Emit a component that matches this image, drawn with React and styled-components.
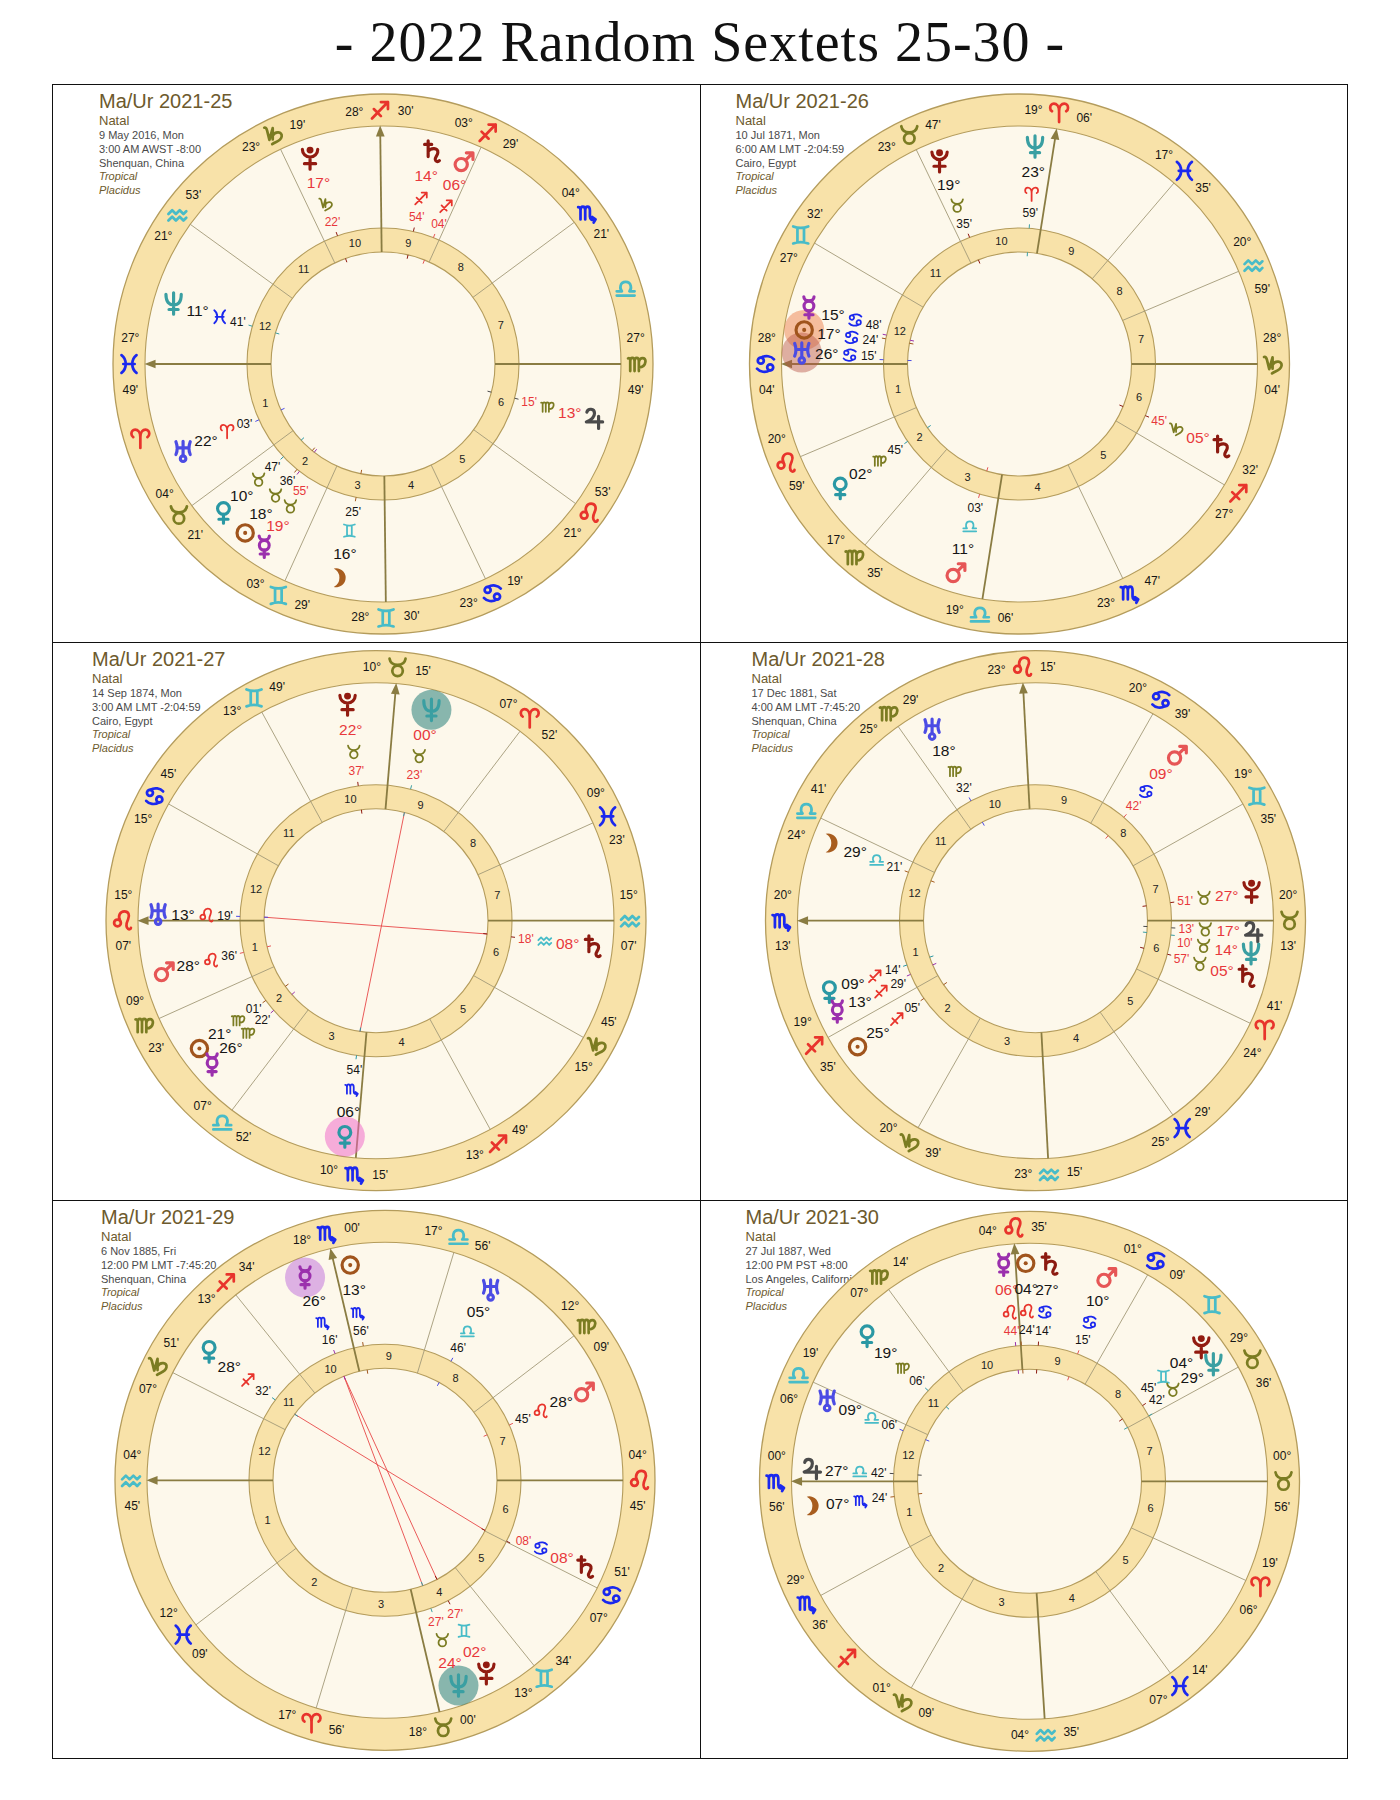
import React from 'react';
import styled, { createGlobalStyle } from 'styled-components';

const GlobalStyle = createGlobalStyle`
  html, body { margin: 0; padding: 0; background: #ffffff; }
  body { width: 1400px; font-family: "Liberation Sans", Arial, sans-serif; }
`;

const RING = '#f8e2a9';
const CREAM = '#fdf8eb';
const EDGE = '#b49c5c';
const AXIS = '#8a7c42';
const CUSP = '#a39a78';
const RED = '#e8383c';
const INK = '#151515';

const Page = styled.div`
  width: 1400px;
  min-height: 1800px;
  background: #fff;
  display: flex;
  flex-direction: column;
  align-items: flex-start;
`;

const Title = styled.h1`
  margin: 0;
  width: 1400px;
  height: 84px;
  line-height: 84px;
  text-align: center;
  font-family: "Liberation Serif", "DejaVu Serif", serif;
  font-weight: 400;
  font-size: 56px;
  letter-spacing: 1px;
  color: #111;
`;

const Grid = styled.div`
  margin-left: 52px;
  width: 1296px;
  box-sizing: border-box;
  display: grid;
  grid-template-columns: 1fr 1fr;
  grid-template-rows: repeat(3, 557px);
  gap: 1px;
  padding: 1px;
  background: #111;
`;

const Cell = styled.div`
  background: #fff;
  display: grid;
  overflow: hidden;
  & > * {
    grid-area: 1 / 1;
  }
`;

const Header = styled.div`
  align-self: start;
  justify-self: start;
  display: flex;
  flex-direction: column;
  padding: 5px 0 0 ${(p) => p.$x}px;
  white-space: nowrap;
`;

const ChartName = styled.div`
  font-size: 20px;
  line-height: 22px;
  color: #6d5a2d;
`;

const ChartKind = styled.div`
  margin-top: 1px;
  font-size: 13px;
  line-height: 16px;
  color: #6d5a2d;
`;

const InfoLine = styled.div`
  font-size: 11px;
  line-height: 13.8px;
  color: ${(p) => (p.$italic ? '#6d5a2d' : '#4a4a4a')};
  font-style: ${(p) => (p.$italic ? 'italic' : 'normal')};
  &:first-of-type {
    margin-top: 1px;
  }
`;

const WheelSvg = styled.svg`
  display: block;
  width: 646px;
  height: 557px;
`;

const NumText = styled.text`
  font-family: "Liberation Sans", Arial, sans-serif;
  font-size: ${(p) => p.$size}px;
  fill: ${(p) => p.$color || INK};
`;

const ELEM = ['#e8342c', '#7b7c22', '#48bcc8', '#1b28ee'];
const signColor = (s) => ELEM[s % 4];

/* Astrological symbols drawn as small icons, in a box of about ±10 units */
const SIGN_ICONS = [
  { d: 'M 0 9.5 V -2 C 0 -8 -3 -10 -5.5 -10 C -8 -10 -9.5 -8 -9.5 -5.5 C -9.5 -3.5 -8.5 -2.5 -7.5 -2 M 0 -2 C 0 -8 3 -10 5.5 -10 C 8 -10 9.5 -8 9.5 -5.5 C 9.5 -3.5 8.5 -2.5 7.5 -2' },
  { d: 'M -8.5 -9.5 C -7.5 -3.5 -3.5 -3 0 -3 C 3.5 -3 7.5 -3.5 8.5 -9.5', circles: [[0, 3.4, 5.6]] },
  { d: 'M -8 -9 Q 0 -6 8 -9 M -8 9 Q 0 6 8 9 M -3.5 -7.2 V 7.2 M 3.5 -7.2 V 7.2' },
  { d: 'M -4.5 -6.8 C 0 -9.5 6 -8.5 9 -5 M 4.5 6.8 C 0 9.5 -6 8.5 -9 5', circles: [[-5, -3.5, 3.2], [5, 3.5, 3.2]] },
  { d: 'M -2.2 -0.5 C -4.5 -5 -2 -10 2.5 -10 C 7 -10 8.5 -6 6.5 -1.5 C 4.5 3 4 7 6.5 8.8 C 8 9.8 9.3 8.8 9.5 7.5', circles: [[-4.8, 2.4, 3.6]] },
  { d: 'M -9.5 -6 C -8.5 -6.5 -7.2 -6 -7.2 -4 V 7.5 M -7.2 -3 C -7.2 -7.8 -2.6 -7.8 -2.6 -3 V 7.5 M -2.6 -3 C -2.6 -7.8 2 -7.8 2 -3 V 7.5 M 2 -2.5 C 3 -7.5 9.5 -7.5 9 -2.5 C 8.5 2 5 3.5 2 3.5' },
  { d: 'M -9.5 7 H 9.5 M -9.5 2.5 H -4 C -6.5 0 -6.5 -7.5 0 -7.5 C 6.5 -7.5 6.5 0 4 2.5 H 9.5' },
  { d: 'M -9.5 -6 C -8 -6 -7 -5 -7 -3 V 7 M -7 -2.5 C -7 -8 -2 -8 -2 -2.5 V 7 M -2 -2.5 C -2 -8 3 -8 3 -2.5 V 4 C 3 7 5 8.5 9 7 M 5.5 4.5 L 9 7 L 7 10.5' },
  { d: 'M -8.5 9 L 8.5 -8.5 M 1 -8.5 H 8.5 V -1 M -6.5 -1 L 1 6.5' },
  { d: 'M -10 -7.5 C -8.5 -8 -7.5 -6.5 -7 -4.5 L -4.5 5.5 L -1 -7 V 5 M -1 1 C 1.5 -4 9.5 -3.5 8.5 2 C 7.5 7 2 7.5 -1.5 10' },
  { d: 'M -9.5 -1 L -5.5 -5 L -1.5 -1 L 2.5 -5 L 6.5 -1 L 9.5 -4 M -9.5 6 L -5.5 2 L -1.5 6 L 2.5 2 L 6.5 6 L 9.5 3' },
  { d: 'M -8 -9.5 C -2 -5 -2 5 -8 9.5 M 8 -9.5 C 2 -5 2 5 8 9.5 M -6 0 H 6' },
];

const PLANETS = {
  sun: { color: '#a0541c', icon: { circles: [[0, 0, 8]], dots: [[0, 0, 2]] } },
  moon: { color: '#a85d1e', icon: { fill: 'M -6 -9 A 9.3 9.3 0 1 1 -6 9 A 10.1 10.1 0 0 0 -6 -9 Z' } },
  mercury: { color: '#9b30ad', icon: { d: 'M -5 -10.5 A 5 4 0 0 0 5 -10.5 M 0 3.3 V 10.5 M -4 7 H 4', circles: [[0, -1.5, 4.8]] } },
  venus: { color: '#2a98a4', icon: { d: 'M 0 1.8 V 10.5 M -4.5 6.5 H 4.5', circles: [[0, -4, 5.8]] } },
  mars: { color: '#e65656', icon: { d: 'M 1.8 -1.3 L 8.5 -8 M 2.5 -8.5 H 9 V -2', circles: [[-2.5, 3, 6]] } },
  jupiter: { color: '#4b4b4b', icon: { d: 'M -7 -6.5 C -6 -10.5 0.5 -10.5 0.5 -5.5 C 0.5 -1.5 -3.5 1.5 -7.5 3 H 8.5 M 4.5 -2.5 V 9.5' } },
  saturn: { color: '#8c1a10', icon: { d: 'M -3.5 -10.5 V 5 M -7 -7 H 0 M -3.5 0 C -1 -4 6.5 -4 6 1 C 5.7 4 3 5.5 3.5 8 C 4 10 6 10.5 7.5 9' } },
  uranus: { color: '#4c4ce4', icon: { d: 'M -7 -9 C -5.5 -5 -5.5 0 -7 3.5 M 7 -9 C 5.5 -5 5.5 0 7 3.5 M -6 -3 H 6 M 0 -9.5 V 4.8', circles: [[0, 7.6, 2.7]] } },
  neptune: { color: '#3a9fa2', icon: { d: 'M -7.5 -9 C -7.5 -1 -4 1.5 0 1.5 C 4 1.5 7.5 -1 7.5 -9 M 0 -10.5 V 10.5 M -4.5 6 H 4.5' } },
  pluto: { color: '#921b10', icon: { d: 'M -7.5 -9 A 7.5 7.5 0 0 0 7.5 -9 M 0 -1.5 V 10.5 M -5.5 5 H 5.5', dots: [[0, -8.3, 3.4]] } },
};

function Symbol({ icon, x, y, s, color, w }) {
  return (
    <g transform={`translate(${x.toFixed(2)},${y.toFixed(2)}) scale(${s})`}>
      {icon.d && <path d={icon.d} fill="none" stroke={color} strokeWidth={w} strokeLinecap="round" strokeLinejoin="round" />}
      {icon.circles &&
        icon.circles.map(([a, b, r], i) => <circle key={`c${i}`} cx={a} cy={b} r={r} fill="none" stroke={color} strokeWidth={w} />)}
      {icon.dots && icon.dots.map(([a, b, r], i) => <circle key={`d${i}`} cx={a} cy={b} r={r} fill={color} />)}
      {icon.fill && <path d={icon.fill} fill={color} />}
    </g>
  );
}

const S = { ari: 0, tau: 1, gem: 2, can: 3, leo: 4, vir: 5, lib: 6, sco: 7, sag: 8, cap: 9, aqu: 10, pis: 11 };
const C = (sign, deg, min) => [S[sign], deg, min];
const P = (key, sign, deg, min, opts = {}) => ({ key, sign: S[sign], deg, min, ...opts });

const HL = {
  sun: 'rgba(238, 130, 80, 0.5)',
  uranus: 'rgba(185, 85, 70, 0.45)',
  teal: 'rgba(40, 128, 122, 0.55)',
  pink: 'rgba(240, 95, 200, 0.5)',
  lavender: 'rgba(190, 105, 220, 0.5)',
};

const CHARTS = [
  {
    id: '2021-25', cx: 330, cy: 279, hx: 46,
    info: ['9 May 2016, Mon', '3:00 AM AWST -8:00', 'Shenquan, China'],
    cusps: [C('pis', 27, 49), C('tau', 4, 21), C('gem', 3, 29), C('gem', 28, 30), C('can', 23, 19), C('leo', 21, 53)],
    planets: [
      P('pluto', 'cap', 17, 22, { r: 1 }),
      P('saturn', 'sag', 14, 54, { r: 1 }),
      P('mars', 'sag', 6, 4, { r: 1 }),
      P('neptune', 'pis', 11, 41),
      P('uranus', 'ari', 22, 3, { da: 203.5 }),
      P('jupiter', 'vir', 13, 15, { r: 1 }),
      P('venus', 'tau', 10, 47),
      P('sun', 'tau', 18, 36),
      P('mercury', 'tau', 19, 55, { r: 1, da: 237 }),
      P('moon', 'gem', 16, 25),
    ],
    aspects: [],
  },
  {
    id: '2021-26', cx: 318.5, cy: 279, hx: 35,
    info: ['10 Jul 1871, Mon', '6:00 AM LMT -2:04:59', 'Cairo, Egypt'],
    cusps: [C('can', 28, 4), C('leo', 20, 59), C('vir', 17, 35), C('lib', 19, 6), C('sco', 23, 47), C('sag', 27, 32)],
    planets: [
      P('pluto', 'tau', 19, 35),
      P('neptune', 'ari', 23, 59),
      P('mercury', 'can', 15, 48, { da: 165 }),
      P('sun', 'can', 17, 24, { da: 171, hl: HL.sun }),
      P('uranus', 'can', 26, 15, { da: 177, hl: HL.uranus }),
      P('venus', 'vir', 2, 45),
      P('mars', 'lib', 11, 3),
      P('saturn', 'cap', 5, 45, { r: 1 }),
    ],
    aspects: [],
  },
  {
    id: '2021-27', cx: 323, cy: 277.7, hx: 39,
    info: ['14 Sep 1874, Mon', '3:00 AM LMT -2:04:59', 'Cairo, Egypt'],
    cusps: [C('leo', 15, 7), C('vir', 9, 23), C('lib', 7, 52), C('sco', 10, 15), C('sag', 13, 49), C('cap', 15, 45)],
    planets: [
      P('pluto', 'tau', 22, 37, { r: 1 }),
      P('neptune', 'tau', 0, 23, { r: 1, hl: HL.teal }),
      P('uranus', 'leo', 13, 19),
      P('mars', 'leo', 28, 36),
      P('sun', 'vir', 21, 1),
      P('mercury', 'vir', 26, 22),
      P('venus', 'sco', 6, 54, { hl: HL.pink }),
      P('saturn', 'aqu', 8, 18, { r: 1 }),
    ],
    aspects: [['uranus', 'saturn'], ['neptune', 'venus']],
  },
  {
    id: '2021-28', cx: 334.5, cy: 277.7, hx: 51,
    info: ['17 Dec 1881, Sat', '4:00 AM LMT -7:45:20', 'Shenquan, China'],
    cusps: [C('sco', 20, 13), C('sag', 19, 35), C('cap', 20, 39), C('aqu', 23, 15), C('pis', 25, 29), C('ari', 24, 41)],
    planets: [
      P('uranus', 'vir', 18, 32),
      P('mars', 'can', 9, 42, { r: 1 }),
      P('moon', 'lib', 29, 21),
      P('pluto', 'tau', 27, 51, { r: 1 }),
      P('jupiter', 'tau', 17, 13, { r: 1 }),
      P('neptune', 'tau', 14, 10, { r: 1, da: -8.6 }),
      P('saturn', 'tau', 5, 57, { r: 1, da: -14.8 }),
      P('venus', 'sag', 9, 14),
      P('mercury', 'sag', 13, 29, { da: 204.6 }),
      P('sun', 'sag', 25, 5, { da: 215.3 }),
    ],
    aspects: [],
  },
  {
    id: '2021-29', cx: 332, cy: 279.3, hx: 48,
    info: ['6 Nov 1885, Fri', '12:00 PM LMT -7:45:20', 'Shenquan, China'],
    cusps: [C('aqu', 4, 45), C('pis', 12, 9), C('ari', 17, 56), C('tau', 18, 0), C('gem', 13, 34), C('can', 7, 51)],
    planets: [
      P('mercury', 'sco', 26, 16, { hl: HL.lavender }),
      P('sun', 'sco', 13, 56),
      P('uranus', 'lib', 5, 46),
      P('venus', 'sag', 28, 32),
      P('mars', 'leo', 28, 45),
      P('saturn', 'can', 8, 8, { r: 1, da: -23.5 }),
      P('pluto', 'gem', 2, 27, { r: 1 }),
      P('neptune', 'tau', 24, 27, { r: 1, hl: HL.teal }),
    ],
    aspects: [['mercury', 'neptune'], ['mercury', 'pluto'], ['venus', 'saturn']],
  },
  {
    id: '2021-30', cx: 328.5, cy: 280.3, hx: 45,
    info: ['27 Jul 1887, Wed', '12:00 PM PST +8:00', 'Los Angeles, California'],
    cusps: [C('sco', 0, 56), C('sco', 29, 36), C('cap', 1, 9), C('aqu', 4, 35), C('pis', 7, 14), C('ari', 6, 19)],
    planets: [
      P('mercury', 'leo', 6, 44, { r: 1, da: 96.8 }),
      P('sun', 'leo', 4, 24, { da: 91 }),
      P('saturn', 'can', 27, 14, { da: 84.8 }),
      P('mars', 'can', 10, 15),
      P('venus', 'vir', 19, 6),
      P('uranus', 'lib', 9, 6),
      P('jupiter', 'lib', 27, 42),
      P('moon', 'sco', 7, 24),
      P('pluto', 'gem', 4, 45, { da: 38 }),
      P('neptune', 'tau', 29, 42, { da: 32.5 }),
    ],
    aspects: [],
  },
];

const rad = (d) => (d * Math.PI) / 180;
const norm = (a) => ((a % 360) + 360) % 360;
const lonOf = ([s, d, m]) => s * 30 + d + m / 60;
const pad = (n) => String(n).padStart(2, '0');

function Wheel({ chart }) {
  const { cx, cy } = chart;
  const cusps = [...chart.cusps, ...chart.cusps.map(([s, d, m]) => [(s + 6) % 12, d, m])];
  const asc = lonOf(cusps[0]);
  const ang = (L) => norm(180 + L - asc);
  const at = (r, a) => [cx + r * Math.cos(rad(a)), cy - r * Math.sin(rad(a))];
  const cuspAng = cusps.map((c) => ang(lonOf(c)));
  const usedSigns = new Set(cusps.map((c) => c[0]));
  const trueAng = {};
  chart.planets.forEach((p) => {
    trueAng[p.key] = ang(p.sign * 30 + p.deg + p.min / 60);
  });

  const sides = (a) => {
    const p1 = at(254, a + 5.8);
    const p2 = at(254, a - 5.8);
    return p1[0] + 0.3 * p1[1] <= p2[0] + 0.3 * p2[1] ? [p1, p2] : [p2, p1];
  };

  return (
    <WheelSvg viewBox="0 0 646 557">
      <circle cx={cx} cy={cy} r={270} fill={RING} stroke={EDGE} strokeWidth="1.3" />
      <circle cx={cx} cy={cy} r={238} fill={CREAM} stroke={EDGE} strokeWidth="1.1" />
      <circle cx={cx} cy={cy} r={136} fill={RING} stroke={EDGE} strokeWidth="1.1" />
      <circle cx={cx} cy={cy} r={112} fill={CREAM} stroke={EDGE} strokeWidth="1.1" />

      {cuspAng.map((a, i) => {
        const axis = i % 3 === 0;
        const arrow = i === 0 || i === 9;
        const [x1, y1] = at(112, a);
        const [x2, y2] = at(arrow ? 229 : 238, a);
        return (
          <g key={`c${i}`}>
            <line x1={x1} y1={y1} x2={x2} y2={y2} stroke={axis ? AXIS : CUSP} strokeWidth={axis ? 1.8 : 0.9} />
            {arrow && (
              <polygon
                points={[at(238.5, a), at(227.5, a + 1.1), at(227.5, a - 1.1)].map((p) => p.join(',')).join(' ')}
                fill={AXIS}
              />
            )}
          </g>
        );
      })}

      {chart.aspects.map(([a, b]) => {
        const [x1, y1] = at(112, trueAng[a]);
        const [x2, y2] = at(112, trueAng[b]);
        return <line key={`asp${a}${b}`} x1={x1} y1={y1} x2={x2} y2={y2} stroke="#e84848" strokeWidth="0.9" />;
      })}

      {chart.planets.map((p) => {
        const a = trueAng[p.key];
        const [x1, y1] = at(112, a);
        const [x2, y2] = at(108, a);
        const [x3, y3] = at(136, a);
        const [x4, y4] = at(140, a);
        const col = PLANETS[p.key].color;
        return (
          <g key={`t${p.key}`}>
            <line x1={x1} y1={y1} x2={x2} y2={y2} stroke={col} strokeWidth="1" />
            <line x1={x3} y1={y3} x2={x4} y2={y4} stroke={col} strokeWidth="1" />
          </g>
        );
      })}

      {cuspAng.map((a, i) => {
        const span = norm(cuspAng[(i + 1) % 12] - a);
        const [x, y] = at(124, a + span / 2);
        return (
          <NumText key={`h${i}`} x={x} y={y} $size={11} $color="#222" textAnchor="middle" dominantBaseline="central">
            {i + 1}
          </NumText>
        );
      })}

      {cusps.map(([s, d, m], i) => {
        const a = cuspAng[i];
        const [gx, gy] = at(254, a);
        const [dp, mp] = sides(a);
        return (
          <g key={`r${i}`}>
            <Symbol icon={SIGN_ICONS[s]} x={gx} y={gy} s={0.94} w={2.9} color={signColor(s)} />
            <NumText x={dp[0]} y={dp[1]} $size={12} textAnchor="middle" dominantBaseline="central">
              {pad(d)}°
            </NumText>
            <NumText x={mp[0]} y={mp[1]} $size={12} textAnchor="middle" dominantBaseline="central">
              {pad(m)}'
            </NumText>
          </g>
        );
      })}

      {SIGN_ICONS.map((icon, s) => {
        if (usedSigns.has(s)) return null;
        const [x, y] = at(254, ang(s * 30 + 15));
        return <Symbol key={`i${s}`} icon={icon} x={x} y={y} s={0.94} w={2.9} color={signColor(s)} />;
      })}

      {chart.planets.map((p) => {
        const a = p.da !== undefined ? norm(p.da) : trueAng[p.key];
        const [gx, gy] = at(218, a);
        return p.hl ? <circle key={`hl${p.key}`} cx={gx} cy={gy} r={20} fill={p.hl} /> : null;
      })}

      {chart.planets.map((p) => {
        const a = p.da !== undefined ? norm(p.da) : trueAng[p.key];
        const info = PLANETS[p.key];
        const [gx, gy] = at(218, a);
        const [dx, dy] = at(193, a);
        const [sx, sy] = at(170, a);
        const [mx, my] = at(151, a);
        const numCol = p.r ? RED : INK;
        return (
          <g key={`p${p.key}`}>
            <Symbol icon={info.icon} x={gx} y={gy} s={1.02} w={3.1} color={info.color} />
            <NumText x={dx} y={dy} $size={15.5} $color={numCol} textAnchor="middle" dominantBaseline="central">
              {pad(p.deg)}°
            </NumText>
            <Symbol icon={SIGN_ICONS[p.sign]} x={sx} y={sy} s={0.68} w={2.6} color={signColor(p.sign)} />
            <NumText x={mx} y={my} $size={12} $color={numCol} textAnchor="middle" dominantBaseline="central">
              {pad(p.min)}'
            </NumText>
          </g>
        );
      })}
    </WheelSvg>
  );
}

function ChartCell({ chart }) {
  return (
    <Cell>
      <Header $x={chart.hx}>
        <ChartName>Ma/Ur {chart.id}</ChartName>
        <ChartKind>Natal</ChartKind>
        {chart.info.map((line) => (
          <InfoLine key={line}>{line}</InfoLine>
        ))}
        <InfoLine $italic>Tropical</InfoLine>
        <InfoLine $italic>Placidus</InfoLine>
      </Header>
      <Wheel chart={chart} />
    </Cell>
  );
}

export default function App() {
  return (
    <>
      <GlobalStyle />
      <Page>
        <Title>- 2022 Random Sextets 25-30 -</Title>
        <Grid>
          {CHARTS.map((c) => (
            <ChartCell key={c.id} chart={c} />
          ))}
        </Grid>
      </Page>
    </>
  );
}
